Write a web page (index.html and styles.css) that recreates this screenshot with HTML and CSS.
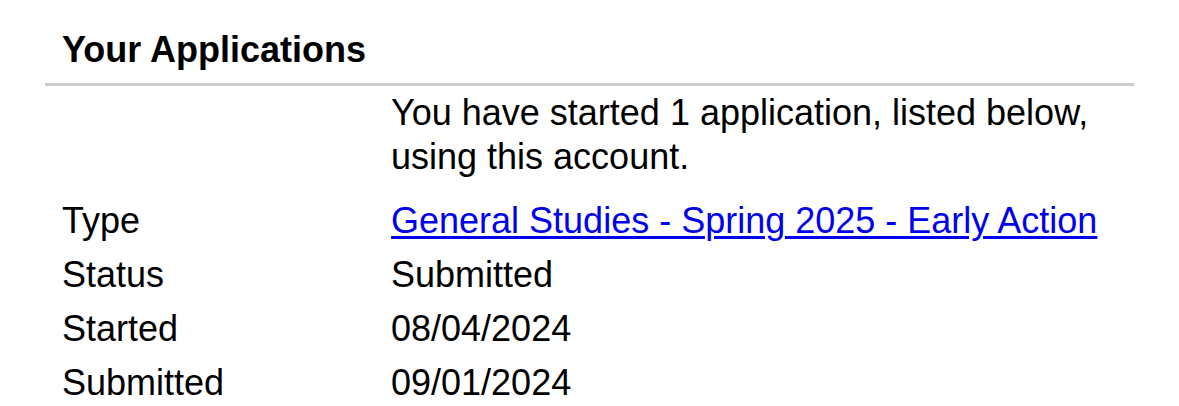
FILE: index.html
```html
<!DOCTYPE html>
<html lang="en">
<head>
<meta charset="utf-8">
<title>Your Applications</title>
<link rel="stylesheet" href="styles.css">
</head>
<body>
<section class="apps">
  <h2 class="apps-title">Your Applications</h2>
  <div class="apps-body">
    <p class="apps-intro">You have started 1 application, listed below, using this account.</p>
    <dl class="apps-table">
      <dt>Type</dt>
      <dd><a href="#">General Studies - Spring 2025 - Early Action</a></dd>
      <dt>Status</dt>
      <dd>Submitted</dd>
      <dt>Started</dt>
      <dd>08/04/2024</dd>
      <dt>Submitted</dt>
      <dd>09/01/2024</dd>
    </dl>
  </div>
</section>
</body>
</html>
```

FILE: styles.css
```css
html, body {
  margin: 0;
  padding: 0;
  background: #fff;
}
body {
  font-family: "Liberation Sans", Arial, Helvetica, sans-serif;
  font-size: 36px;
  color: #000;
}
.apps {
  margin-left: 45px;
  width: 1089px;
  padding-top: 28px;
}
.apps-title {
  margin: 0;
  font-size: 36px;
  font-weight: bold;
  line-height: 44px;
  padding: 0 0 11px 17px;
  border-bottom: 3px solid #cccccc;
}
.apps-body {
  padding-left: 17px;
}
.apps-intro {
  margin: 5px 0 0 329px;
  line-height: 44px;
  max-width: 720px;
}
.apps-table {
  margin: 15px 0 0 0;
  display: grid;
  grid-template-columns: 329px 1fr;
  line-height: 54px;
}
.apps-table dt,
.apps-table dd {
  margin: 0;
}
.apps-table a {
  color: #0000ee;
  text-decoration: underline;
  text-decoration-thickness: 3px;
  text-underline-offset: 3px;
}
```
